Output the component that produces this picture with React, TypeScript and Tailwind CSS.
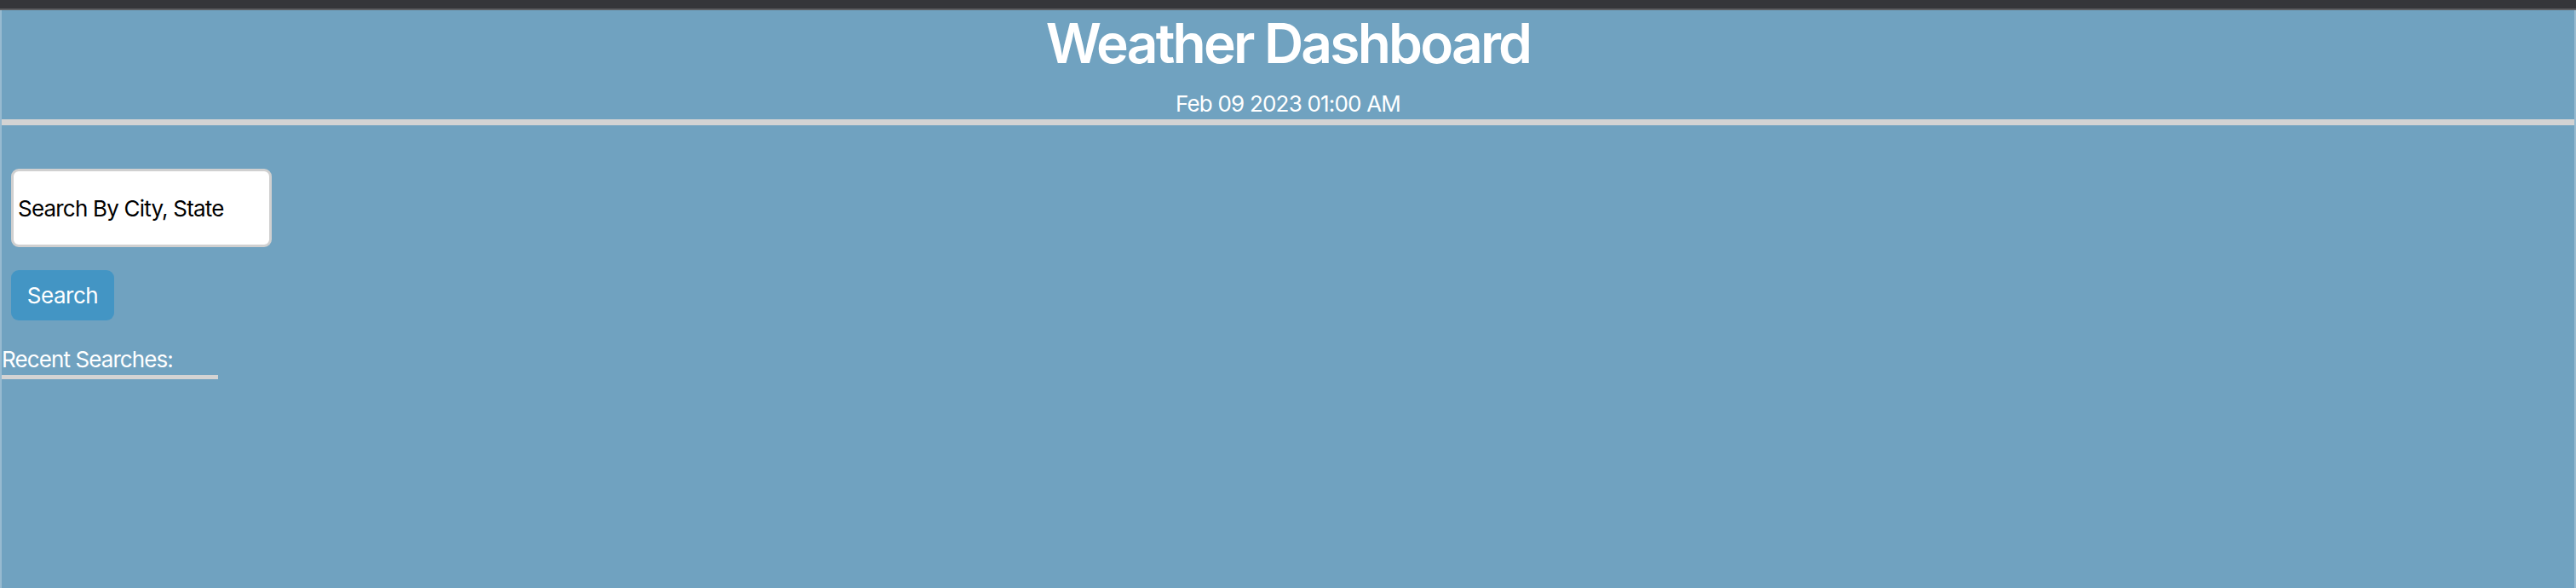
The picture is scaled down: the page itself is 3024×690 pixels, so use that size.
import { useState } from 'react'

export default function App() {
  const [city, setCity] = useState('')
  const recent: string[] = []

  return (
    <div className="flex h-screen flex-col bg-[#70a2c0] font-['Inter','Liberation_Sans',sans-serif] text-white">
      {/* browser chrome strip */}
      <div className="h-[10px] bg-[#35363a]" />
      <div className="h-[2px] bg-[#5e5f62]" />

      <div className="flex-1 border-x-2 border-[#97bad0]">
        <header className="flex flex-col items-center">
          <h1 className="mt-[7px] text-[64px] leading-none font-semibold tracking-[-2.8px]">Weather Dashboard</h1>
          <p className="mt-[26px] text-[26px] leading-none tracking-[-0.8px]">Feb 09 2023 01:00 AM</p>
        </header>
        <div className="mt-[5px] h-[7px] bg-[#d3d3d3]" />

        <div className="flex flex-col items-start">
          <input
            type="text"
            value={city}
            onChange={(e) => setCity(e.target.value)}
            placeholder="Search By City, State"
            className="mt-[51px] ml-[11px] h-[92px] w-[306px] rounded-[9px] border-[3px] border-[#d0d0d0] bg-white px-[5px] text-[26px] tracking-[-0.8px] text-black outline-none placeholder:text-black"
          />
          <button className="mt-[27px] ml-[11px] h-[59px] w-[121px] rounded-[9px] bg-[#4395c4] text-[26px] tracking-[-0.5px] text-white">
            Search
          </button>

          <h2 className="mt-[33px] text-[26px] leading-none tracking-[-0.9px]">Recent Searches:</h2>
          <div className="mt-[5px] h-[5px] w-[254px] bg-[#d3d3d3]" />
          <ul>
            {recent.map((r) => (
              <li key={r}>{r}</li>
            ))}
          </ul>
        </div>
      </div>
    </div>
  )
}
